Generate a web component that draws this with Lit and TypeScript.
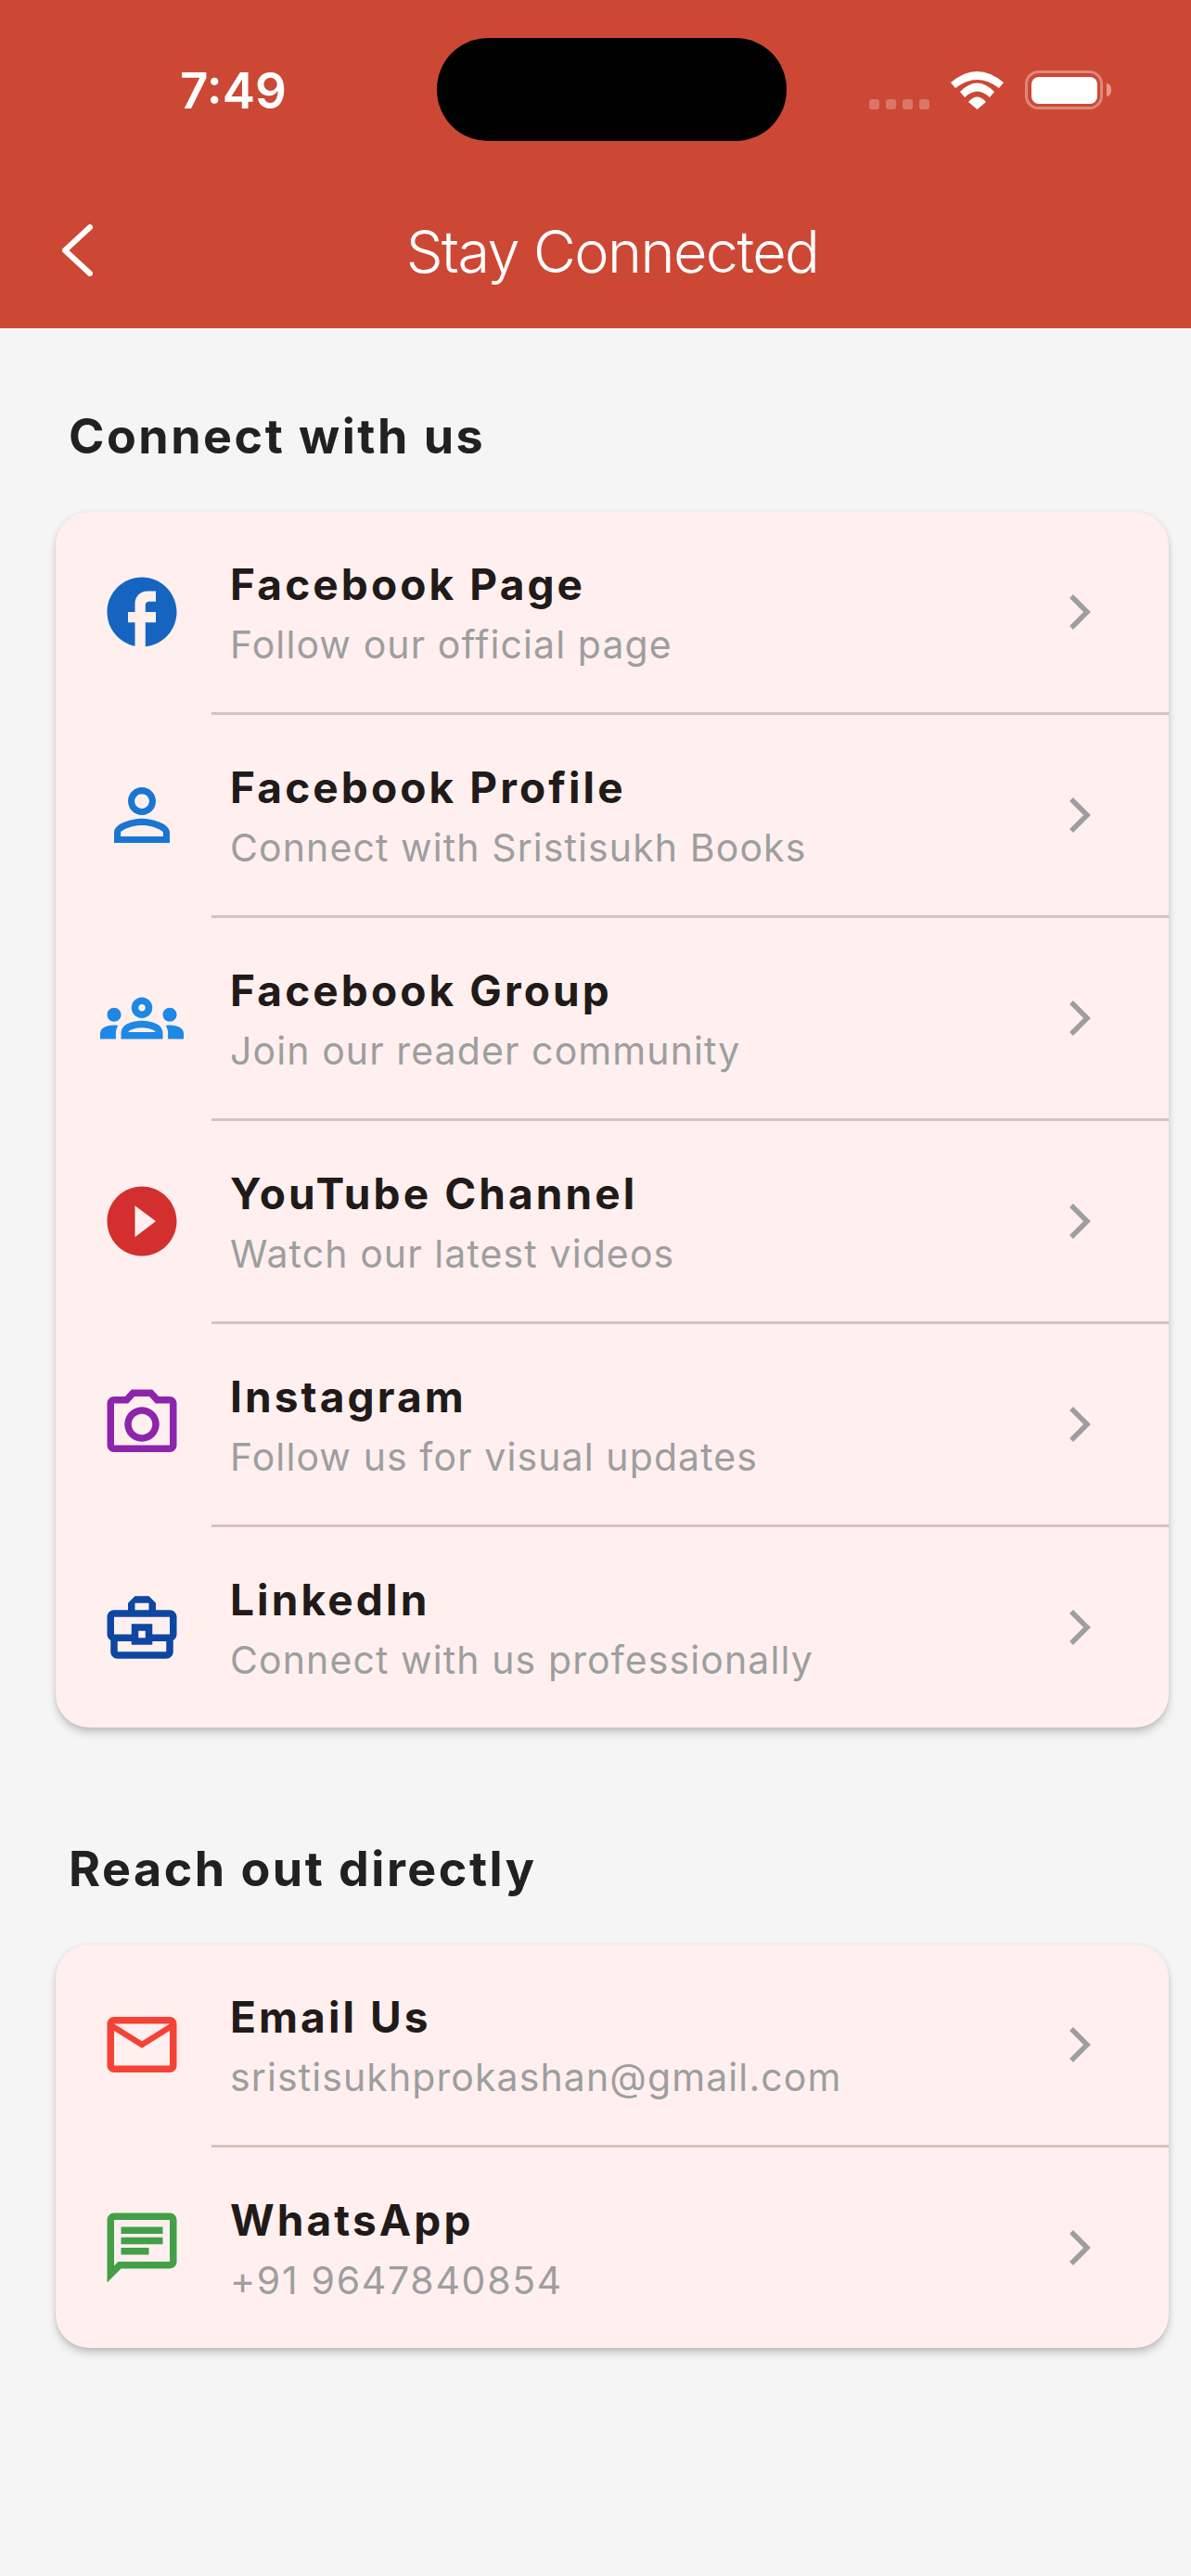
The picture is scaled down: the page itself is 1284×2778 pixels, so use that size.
import { LitElement, html, css, svg } from 'lit';
import { customElement } from 'lit/decorators.js';

const ICONS = {
  facebook: svg`<path d="M22 12c0-5.52-4.48-10-10-10S2 6.48 2 12c0 4.84 3.44 8.87 8 9.8V15H8v-3h2V9.5C10 7.57 11.57 6 13.5 6H16v3h-2c-.55 0-1 .45-1 1v2h3v3h-3v6.95c5.05-.5 9-4.76 9-9.95z"/>`,
  person: svg`<path d="M12 5.9c1.16 0 2.1.94 2.1 2.1s-.94 2.1-2.1 2.1S9.9 9.16 9.9 8s.94-2.1 2.1-2.1m0 9c2.97 0 6.1 1.46 6.1 2.1v1.1H5.9V17c0-.64 3.13-2.1 6.1-2.1M12 4C9.79 4 8 5.79 8 8s1.79 4 4 4 4-1.79 4-4-1.79-4-4-4zm0 9c-2.67 0-8 1.34-8 4v3h16v-3c0-2.66-5.33-4-8-4z"/>`,
  groups: svg`<path d="M4,13c1.1,0,2-0.9,2-2c0-1.1-0.9-2-2-2s-2,0.9-2,2C2,12.1,2.9,13,4,13z M5.13,14.1C4.76,14.04,4.39,14,4,14c-0.99,0-1.93,0.21-2.78,0.58C0.48,14.9,0,15.62,0,16.43V18l4.5,0v-1.61C4.5,15.56,4.73,14.78,5.13,14.1z M20,13c1.1,0,2-0.9,2-2c0-1.1-0.9-2-2-2s-2,0.9-2,2C18,12.1,18.9,13,20,13z M24,16.43c0-0.81-0.48-1.53-1.22-1.85C21.93,14.21,20.99,14,20,14c-0.39,0-0.76,0.04-1.13,0.1c0.4,0.68,0.63,1.46,0.63,2.29V18l4.5,0V16.43z M16.24,13.65c-1.17-0.52-2.61-0.9-4.24-0.9c-1.63,0-3.07,0.39-4.24,0.9C6.68,14.13,6,15.21,6,16.39V18h12v-1.61C18,15.21,17.32,14.13,16.24,13.65z M8.07,16c0.09-0.23,0.13-0.39,0.91-0.69c0.97-0.38,1.99-0.56,3.02-0.56s2.05,0.18,3.02,0.56c0.77,0.3,0.81,0.46,0.91,0.69H8.07z M12,8c0.55,0,1,0.45,1,1s-0.45,1-1,1s-1-0.45-1-1S11.45,8,12,8 M12,6c-1.66,0-3,1.34-3,3c0,1.66,1.34,3,3,3s3-1.34,3-3C15,7.34,13.66,6,12,6L12,6z"/>`,
  play: svg`<path d="M12 2C6.48 2 2 6.48 2 12s4.48 10 10 10 10-4.48 10-10S17.52 2 12 2zm-2 14.5v-9l6 4.5-6 4.5z"/>`,
  camera: svg`<path d="M14.12 4l1.83 2H20v12H4V6h4.05l1.83-2h4.24M15 2H9L7.17 4H4c-1.1 0-2 .9-2 2v12c0 1.1.9 2 2 2h16c1.1 0 2-.9 2-2V6c0-1.1-.9-2-2-2h-3.17L15 2zm-3 7c1.65 0 3 1.35 3 3s-1.35 3-3 3-3-1.35-3-3 1.35-3 3-3m0-2c-2.76 0-5 2.24-5 5s2.24 5 5 5 5-2.24 5-5-2.24-5-5-5z"/>`,
  briefcase: svg`<path d="M20 7h-4V5l-2-2h-4L8 5v2H4c-1.1 0-2 .9-2 2v5c0 .75.4 1.38 1 1.73V19c0 1.11.89 2 2 2h14c1.11 0 2-.89 2-2v-3.28c.59-.35 1-.99 1-1.72V9c0-1.1-.9-2-2-2zM10 5h4v2h-4V5zM4 9h16v5h-5v-3H9v3H4V9zm9 6h-2v-2h2v2zm6 4H5v-3h4v1h6v-1h4v3z"/>`,
  email: svg`<path d="M22 6c0-1.1-.9-2-2-2H4c-1.1 0-2 .9-2 2v12c0 1.1.9 2 2 2h16c1.1 0 2-.9 2-2V6zm-2 0l-8 5-8-5h16zm0 12H4V8l8 5 8-5v10z"/>`,
  message: svg`<path d="M20 4v12H5.17L4 17.17V4h16m0-2H4c-1.1 0-1.99.9-1.99 2L2 22l4-4h14c1.1 0 2-.9 2-2V4c0-1.1-.9-2-2-2zM6 12h8v2H6zM6 9h12v2H6zM6 6h12v2H6z"/>`,
};

type IconName = keyof typeof ICONS;

interface LinkRow {
  icon: IconName;
  color: string;
  title: string;
  subtitle: string;
  phone?: boolean;
}

const SOCIAL: LinkRow[] = [
  { icon: 'facebook', color: '#1565c0', title: 'Facebook Page', subtitle: 'Follow our official page' },
  { icon: 'person', color: '#1976d2', title: 'Facebook Profile', subtitle: 'Connect with Sristisukh Books' },
  { icon: 'groups', color: '#1e88e5', title: 'Facebook Group', subtitle: 'Join our reader community' },
  { icon: 'play', color: '#d32f2f', title: 'YouTube Channel', subtitle: 'Watch our latest videos' },
  { icon: 'camera', color: '#8e24aa', title: 'Instagram', subtitle: 'Follow us for visual updates' },
  { icon: 'briefcase', color: '#0d47a1', title: 'LinkedIn', subtitle: 'Connect with us professionally' },
];

const DIRECT: LinkRow[] = [
  { icon: 'email', color: '#f44336', title: 'Email Us', subtitle: 'sristisukhprokashan@gmail.com' },
  { icon: 'message', color: '#43a047', title: 'WhatsApp', subtitle: '+91 9647840854', phone: true },
];

@customElement('app-root')
export class AppRoot extends LitElement {
  static override styles = css`
    :host {
      display: block;
      min-height: 2778px;
      background: #f5f5f5;
      font-family: Inter, 'Liberation Sans', sans-serif;
    }

    .header {
      height: 354px;
      box-sizing: border-box;
      padding-top: 41px;
      background: #cc4835;
      color: #fff;
    }

    .status {
      display: grid;
      grid-template-columns: 471px 377px 1fr;
      height: 111px;
      align-items: center;
    }

    .time {
      padding: 3px 0 0 194px;
      font-size: 53px;
      font-weight: 600;
      line-height: 60px;
    }

    .island {
      height: 111px;
      border-radius: 55px;
      background: #000;
    }

    .indicators {
      display: flex;
      align-items: flex-end;
      height: 42px;
      padding: 1px 0 0 89px;
    }

    .dots {
      display: flex;
      gap: 7px;
      margin-right: 23px;
    }

    .dots i {
      width: 11px;
      height: 11px;
      border-radius: 3px;
      background: rgba(255, 255, 255, 0.25);
    }

    .wifi {
      width: 57px;
      height: 41px;
      margin-right: 23px;
    }

    .nav {
      display: flex;
      align-items: center;
      height: 116px;
      margin-top: 60px;
      padding-left: 67px;
    }

    .back {
      width: 33px;
      height: 56px;
    }

    .nav-title {
      flex: 1;
      margin-right: 64px;
      padding-top: 1px;
      font-size: 63px;
      font-weight: 300;
      line-height: 110px;
      letter-spacing: -1.6px;
      text-align: center;
    }

    .content {
      padding: 85px 24px 0 60px;
    }

    .section-title {
      margin: 0 0 49px 14px;
      color: #212121;
      font-size: 52px;
      font-weight: 700;
      line-height: 64px;
      letter-spacing: 2.5px;
    }

    .card {
      margin-bottom: 121px;
      border-radius: 36px;
      background: #fff0ef;
      box-shadow: 0 6px 10px -1px rgba(0, 0, 0, 0.22), 0 0 5px rgba(0, 0, 0, 0.07);
    }

    .row {
      display: flex;
      align-items: center;
      height: 216px;
      padding-left: 48px;
    }

    .icon {
      flex: none;
      width: 90px;
      height: 90px;
      margin-right: 50px;
      fill: currentColor;
    }

    .text {
      flex: 1;
      min-width: 0;
    }

    .title {
      color: #211a19;
      font-size: 46px;
      font-weight: 700;
      line-height: 60px;
      letter-spacing: 3.1px;
    }

    .subtitle {
      margin-top: 10px;
      color: #9e9e9e;
      font-size: 41px;
      line-height: 50px;
      letter-spacing: 1.1px;
    }

    .subtitle.phone {
      letter-spacing: 1.7px;
    }

    .chevron {
      flex: none;
      width: 78px;
      height: 78px;
      margin-right: 58px;
      fill: none;
      stroke: #9e9e9e;
      stroke-width: 5.5;
    }

    .divider {
      height: 3px;
      margin-left: 168px;
      background: #d8c2bd;
    }
  `;

  private renderRow(row: LinkRow, index: number) {
    return html`
      ${index > 0 ? html`<div class="divider"></div>` : ''}
      <div class="row">
        <svg class="icon" viewBox="0 0 24 24" style="color: ${row.color}">${ICONS[row.icon]}</svg>
        <div class="text">
          <div class="title">${row.title}</div>
          <div class="subtitle ${row.phone ? 'phone' : ''}">${row.subtitle}</div>
        </div>
        <svg class="chevron" viewBox="0 0 78 78"><path d="M31 22L48 39L31 56" /></svg>
      </div>
    `;
  }

  override render() {
    return html`
      <div class="header">
        <div class="status">
          <div class="time">7:49</div>
          <div class="island"></div>
          <div class="indicators">
            <div class="dots"><i></i><i></i><i></i><i></i></div>
            <svg class="wifi" viewBox="0 0 57 41" fill="#fff">
              <path d="M0 12Q28.5-12 57 12L52 18Q28.5 0 5 18Z" />
              <path d="M10 22Q28.5 3 47 22L42 28Q28.5 15 15 28Z" />
              <path d="M19 33Q28.5 22 38 33L28.5 41Z" />
            </svg>
            <svg width="93" height="42" viewBox="0 0 93 42">
              <rect x="1.5" y="1.5" width="81" height="39" rx="13" fill="none" stroke="#fff" stroke-opacity=".35" stroke-width="3" />
              <rect x="7" y="7" width="71" height="29" rx="8" fill="#fff" />
              <path d="M88 14c3 0 5 3 5 7s-2 7-5 7z" fill="#fff" fill-opacity=".45" />
            </svg>
          </div>
        </div>
        <div class="nav">
          <svg class="back" viewBox="0 0 33 56" fill="none" stroke="#fff" stroke-width="6" stroke-linecap="round" stroke-linejoin="round">
            <path d="M30 3L3 28L30 53" />
          </svg>
          <div class="nav-title">Stay Connected</div>
        </div>
      </div>
      <div class="content">
        <h2 class="section-title">Connect with us</h2>
        <div class="card">${SOCIAL.map((row, i) => this.renderRow(row, i))}</div>
        <h2 class="section-title">Reach out directly</h2>
        <div class="card">${DIRECT.map((row, i) => this.renderRow(row, i))}</div>
      </div>
    `;
  }
}
